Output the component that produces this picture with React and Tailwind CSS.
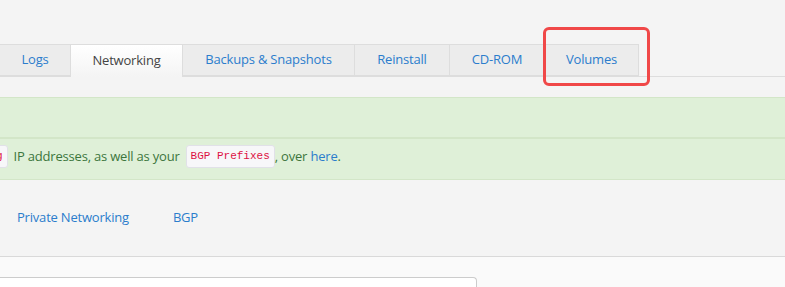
import React from 'react';

const tabs = [
  { label: 'Logs', width: 'w-[72px]' },
  { label: 'Networking', width: 'w-[113px]', active: true },
  { label: 'Backups & Snapshots', width: 'w-[173px]' },
  { label: 'Reinstall', width: 'w-[96px]' },
  { label: 'CD-ROM', width: 'w-[96px]' },
  { label: 'Volumes', width: 'w-[95px]', marked: true },
];

const App = () => {
  return (
    <div
      className="w-full h-[287px] overflow-hidden bg-[#f4f4f4] text-[13px] tracking-[-0.2px]"
      style={{ fontFamily: '"Open Sans", "Noto Sans", sans-serif' }}
    >
      {/* Tabs */}
      <div className="pt-[44px]">
        <div className="flex h-[33px] border-b border-[#dddddd] -ml-px">
          {tabs.map((tab) => (
            <div
              key={tab.label}
              className={`relative flex items-center justify-center -mr-px border border-[#dddddd] ${tab.width} ${
                tab.active
                  ? 'h-[33px] border-b-0 bg-gradient-to-b from-white to-[#f4f4f4] text-[#444444] z-10'
                  : 'h-[32px] bg-[#ececec] text-[#2b7dcc]'
              }`}
            >
              {tab.label}
              {tab.marked && (
                <div className="absolute left-[-2px] top-[-18px] w-[107px] h-[59px] border-[3px] border-[#f04848] rounded-[6px]" />
              )}
            </div>
          ))}
        </div>
      </div>

      {/* Alerts */}
      <div className="mt-[20px]">
        <div className="h-[42px] bg-[#dff0d8] border-t border-b-2 border-[#d3e6c8]" />
        <div className="h-[41px] pb-[5px] bg-[#dff0d8] border-b border-[#d3e6c8] flex items-center text-[#3c763d]">
          <code
            className="-ml-[9px] mr-[6px] px-[4px] py-[2px] rounded-[3px] bg-[#f7f7f9] border border-[#e1e1e8] text-[11px] tracking-normal text-[#dd1144]"
            style={{ fontFamily: '"Liberation Mono", monospace' }}
          >
            g
          </code>
          <span>IP addresses, as well as your</span>
          <code
            className="ml-[6px] px-[4px] py-[2px] rounded-[3px] bg-[#f7f7f9] border border-[#e1e1e8] text-[11px] tracking-normal text-[#dd1144]"
            style={{ fontFamily: '"Liberation Mono", monospace' }}
          >
            BGP Prefixes
          </code>
          <span>, over&nbsp;</span>
          <span className="text-[#2b7dcc]">here</span>
          <span>.</span>
        </div>
      </div>

      {/* Sub navigation */}
      <div className="h-[76px] flex items-center pl-[17px] gap-[44px] text-[#2b7dcc]">
        <span>Private Networking</span>
        <span>BGP</span>
      </div>

      {/* Content */}
      <div className="border-t border-[#d9d9d9] bg-[#fafafa] pt-[20px] h-[40px]">
        <div className="w-[477px] h-[20px] bg-white border-t border-r border-[#cccccc] rounded-tr-[4px]" />
      </div>
    </div>
  );
};

export default App;
